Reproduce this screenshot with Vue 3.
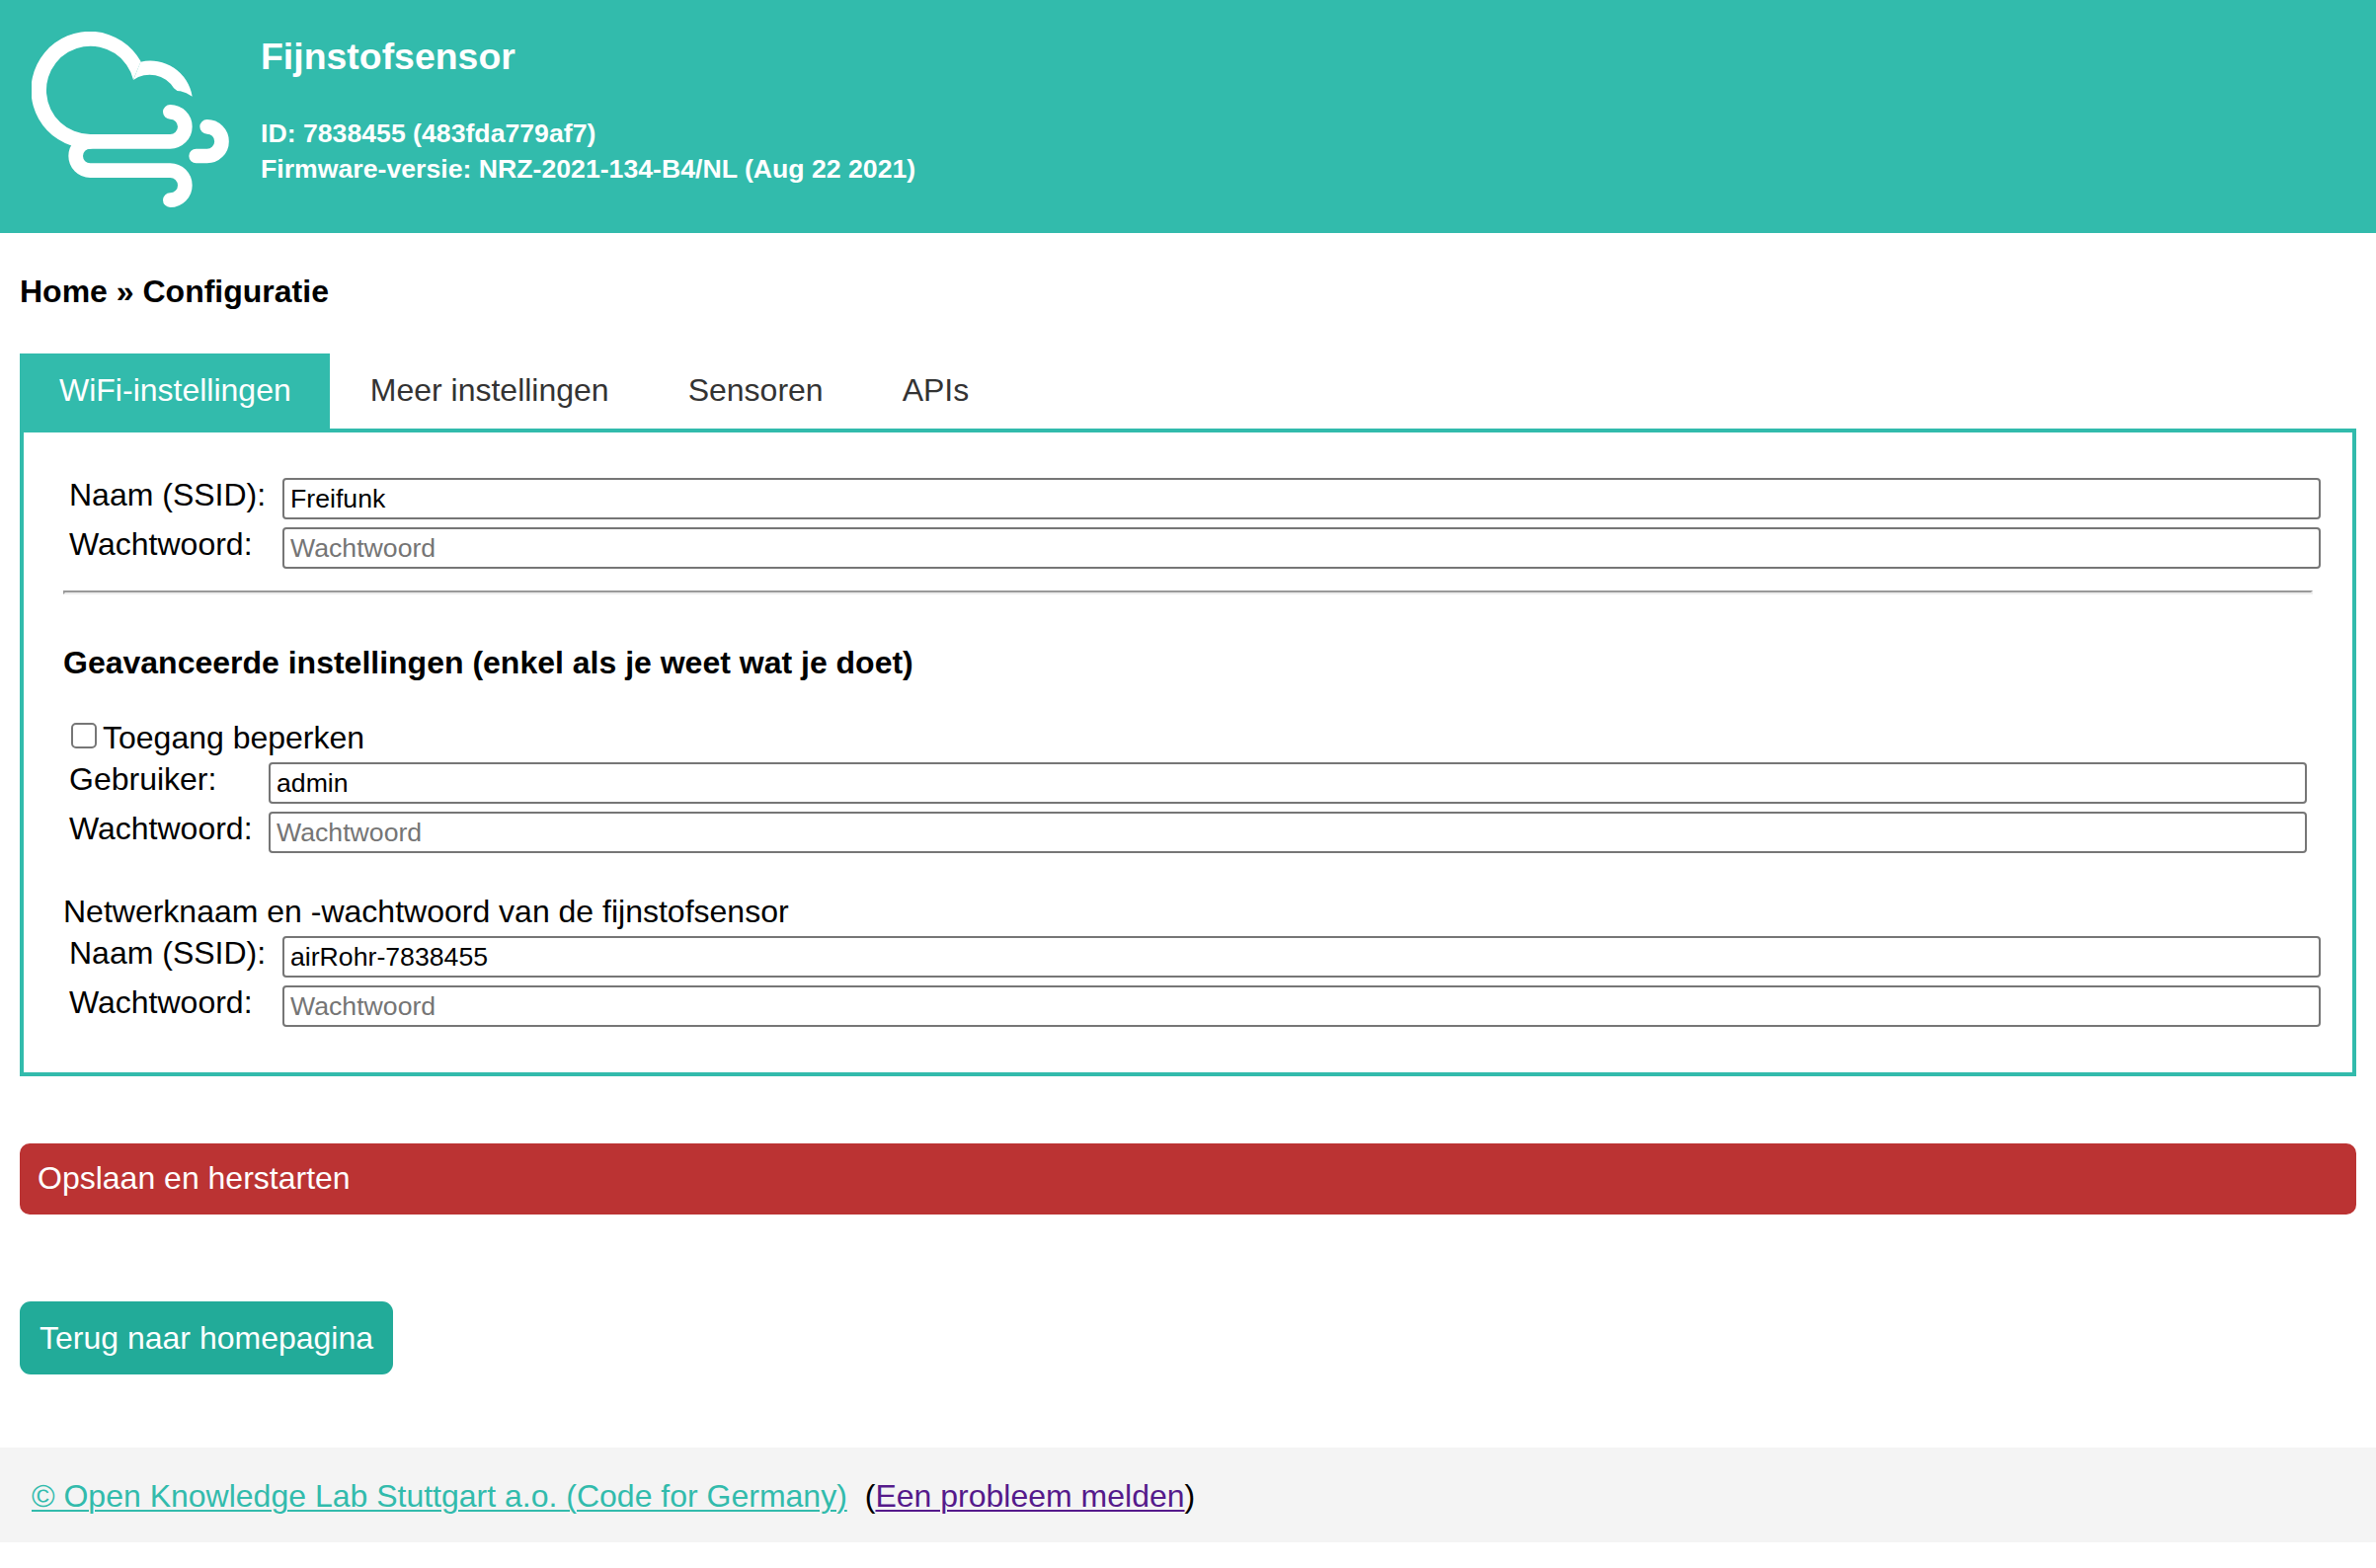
<script setup>
import { reactive, ref } from 'vue'

const tabs = ['WiFi-instellingen', 'Meer instellingen', 'Sensoren', 'APIs']
const activeTab = ref(0)
const restricted = ref(false)

const wifi = reactive([
  { label: 'Naam (SSID):', value: 'Freifunk', type: 'text', hint: '' },
  { label: 'Wachtwoord:', value: '', type: 'password', hint: 'Wachtwoord' },
])
const access = reactive([
  { label: 'Gebruiker:', value: 'admin', type: 'text', hint: '' },
  { label: 'Wachtwoord:', value: '', type: 'password', hint: 'Wachtwoord' },
])
const sensorNetwork = reactive([
  { label: 'Naam (SSID):', value: 'airRohr-7838455', type: 'text', hint: '' },
  { label: 'Wachtwoord:', value: '', type: 'password', hint: 'Wachtwoord' },
])
</script>

<template>
  <div class="page">
    <header class="header">
      <svg class="logo" viewBox="96 96 600 534" aria-hidden="true">
        <path fill="#fff" d="M428 187A178 178 0 1 0 215 442L274 452V408A134 134 0 1 1 405 242Z" />
        <path fill="#fff" d="M427 188A129 129 0 0 1 584 293Q566 281 548 277Q537 278 528 268A86 86 0 0 0 405 243Z" />
        <g fill="none" stroke="#fff" stroke-width="44" stroke-linecap="round">
          <path d="M274 430H517a45 45 0 0 0 0-90" />
          <path d="M274 430a44 44 0 0 0 0 88H517a45 45 0 0 1 0 90" />
          <path d="M596 474H629a44.500 44.500 0 0 0 0-89" />
        </g>
      </svg>
      <div class="device">
        <h1>Fijnstofsensor</h1>
        <p>ID: 7838455 (483fda779af7)<br>Firmware-versie: NRZ-2021-134-B4/NL (Aug 22 2021)</p>
      </div>
    </header>

    <main class="content">
      <h2 class="crumbs">Home » Configuratie</h2>

      <nav class="tabs">
        <button
          v-for="(tab, i) in tabs"
          :key="tab"
          type="button"
          class="tab"
          :class="{ active: i === activeTab }"
          @click="activeTab = i"
        >{{ tab }}</button>
      </nav>

      <section class="panel">
        <div class="fields">
          <label v-for="f in wifi" :key="f.label" class="row">
            <span class="label">{{ f.label }}</span>
            <input v-model="f.value" class="input" :type="f.type" :placeholder="f.hint">
          </label>
        </div>
        <hr class="rule">
        <h3 class="subtitle">Geavanceerde instellingen (enkel als je weet wat je doet)</h3>
        <label class="check">
          <input v-model="restricted" class="box" type="checkbox">
          <span>Toegang beperken</span>
        </label>
        <div class="fields narrow">
          <label v-for="f in access" :key="f.label" class="row">
            <span class="label">{{ f.label }}</span>
            <input v-model="f.value" class="input" :type="f.type" :placeholder="f.hint">
          </label>
        </div>
        <p class="note">Netwerknaam en -wachtwoord van de fijnstofsensor</p>
        <div class="fields">
          <label v-for="f in sensorNetwork" :key="f.label" class="row">
            <span class="label">{{ f.label }}</span>
            <input v-model="f.value" class="input" :type="f.type" :placeholder="f.hint">
          </label>
        </div>
      </section>

      <button type="button" class="save">Opslaan en herstarten</button>
      <a class="back" href="#">Terug naar homepagina</a>
    </main>

    <footer class="footer">
      <a class="lab" href="#">© Open Knowledge Lab Stuttgart a.o. (Code for Germany)</a>
      <span class="report">(<a class="issue" href="#">Een probleem melden</a>)</span>
    </footer>
  </div>
</template>

<style>
body {
  margin: 0;
  background: #fff;
}
</style>

<style scoped>
.page {
  font: 32px/36px "Liberation Sans", Arial, sans-serif;
  color: #000;
}
h1, h2, h3, p {
  margin: 0;
}
.header {
  display: flex;
  box-sizing: border-box;
  height: 236px;
  padding: 32px;
  background: #32bbac;
  color: #fff;
  font-weight: bold;
}
.logo {
  flex: none;
  width: 200px;
  height: 178px;
  margin-right: 32px;
}
.device {
  padding-top: 3px;
}
.device h1 {
  font-size: 37.440px;
  line-height: 44px;
}
.device p {
  margin-top: 38px;
  font-size: 26.667px;
}
.content {
  padding: 41px 20px 74px;
}
.crumbs {
  font-size: 32px;
}
.tabs {
  display: flex;
  margin-top: 45px;
}
.tab {
  height: 76px;
  padding: 19px 40px 21px;
  border: 0;
  background: transparent;
  font: inherit;
  color: #333;
}
.tab.active {
  margin-right: 0.500px;
  padding-right: 39.500px;
  background: #32bbac;
  color: #fff;
}
.panel {
  box-sizing: border-box;
  height: 656px;
  padding: 42px 40px;
  border: 4px solid #32bbac;
}
.row {
  display: flex;
  align-items: flex-start;
  height: 50px;
}
.label {
  flex: none;
  width: 216px;
  padding: 3px 0 0 6px;
}
.narrow .label {
  width: 202px;
}
.input {
  box-sizing: border-box;
  flex: none;
  width: 2064px;
  height: 42px;
  margin: 4px 0 0;
  padding: 2px 6px;
  border: 2px solid #767676;
  border-radius: 4px;
  outline: 0;
  background: #fff;
  font: 26.667px "Liberation Sans", Arial, sans-serif;
  color: #000;
}
.input::placeholder {
  color: #757575;
}
.rule {
  box-sizing: border-box;
  height: 4px;
  margin: 18px 0 0;
  border: 2px solid;
  border-color: #9a9a9a #eee #eee #9a9a9a;
}
.subtitle {
  margin-top: 51px;
  font-size: 32px;
}
.check {
  display: flex;
  align-items: flex-start;
  gap: 6px;
  margin: 40px 0 3px 8px;
}
.box {
  box-sizing: border-box;
  width: 26px;
  height: 26px;
  margin: 3px 0 0;
  border: 2px solid #767676;
  border-radius: 5px;
  background: #fff;
  appearance: none;
}
.note {
  margin: 37px 0 3px;
}
.save {
  display: block;
  width: 100%;
  height: 72px;
  margin-top: 68px;
  padding: 17px 18px 19px;
  border: 0;
  border-radius: 10px;
  background: #b33;
  font: inherit;
  text-align: left;
  color: #fff;
}
.back {
  display: block;
  width: max-content;
  margin-top: 88px;
  padding: 19px 20px;
  border-radius: 11px;
  background: #22ab99;
  text-decoration: none;
  color: #fff;
}
.footer {
  display: flex;
  gap: 18px;
  padding: 31px 32px 29px;
  background: #f4f4f4;
}
.footer a {
  text-decoration-thickness: 2px;
  text-underline-offset: 3px;
}
.lab {
  color: #32bbac;
}
.issue {
  color: #551a8b;
}
</style>
